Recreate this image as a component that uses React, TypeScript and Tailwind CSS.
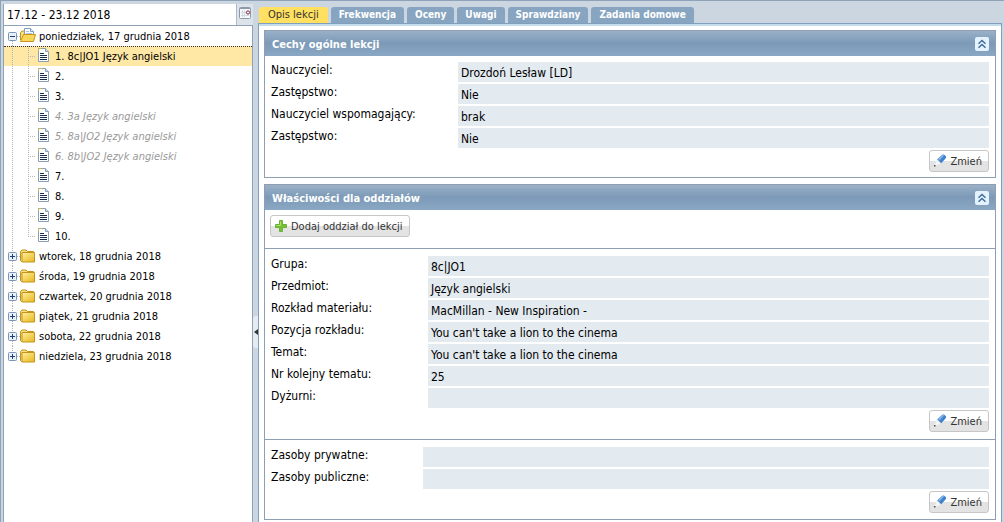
import { useState } from 'react';
import clsx from 'clsx';

interface Lesson {
  id: number;
  label: string;
  muted?: boolean;
}

interface Field {
  label: string;
  value: string;
}

const tabs = ['Opis lekcji', 'Frekwencja', 'Oceny', 'Uwagi', 'Sprawdziany', 'Zadania domowe'];

const lessons: Lesson[] = [
  { id: 1, label: '1. 8c|JO1 Język angielski' },
  { id: 2, label: '2.' },
  { id: 3, label: '3.' },
  { id: 4, label: '4. 3a Język angielski', muted: true },
  { id: 5, label: '5. 8a|JO2 Język angielski', muted: true },
  { id: 6, label: '6. 8b|JO2 Język angielski', muted: true },
  { id: 7, label: '7.' },
  { id: 8, label: '8.' },
  { id: 9, label: '9.' },
  { id: 10, label: '10.' },
];

const days = [
  'wtorek, 18 grudnia 2018',
  'środa, 19 grudnia 2018',
  'czwartek, 20 grudnia 2018',
  'piątek, 21 grudnia 2018',
  'sobota, 22 grudnia 2018',
  'niedziela, 23 grudnia 2018',
];

const generalFields: Field[] = [
  { label: 'Nauczyciel:', value: 'Drozdoń Lesław [LD]' },
  { label: 'Zastępstwo:', value: 'Nie' },
  { label: 'Nauczyciel wspomagający:', value: 'brak' },
  { label: 'Zastępstwo:', value: 'Nie' },
];

const groupFields: Field[] = [
  { label: 'Grupa:', value: '8c|JO1' },
  { label: 'Przedmiot:', value: 'Język angielski' },
  { label: 'Rozkład materiału:', value: 'MacMillan - New Inspiration -' },
  { label: 'Pozycja rozkładu:', value: "You can't take a lion to the cinema" },
  { label: 'Temat:', value: "You can't take a lion to the cinema" },
  { label: 'Nr kolejny tematu:', value: '25' },
  { label: 'Dyżurni:', value: '' },
];

const resourceFields: Field[] = [
  { label: 'Zasoby prywatne:', value: '' },
  { label: 'Zasoby publiczne:', value: '' },
];

function Expander({ open, first, last }: { open?: boolean; first?: boolean; last?: boolean }) {
  return (
    <svg width="16" height="20" viewBox="0 0 16 20" className="shrink-0" aria-hidden="true">
      {!first && <path d="M8.5 0v6" stroke="#b5b5b5" strokeDasharray="1 1" />}
      {!last && <path d="M8.5 15v5" stroke="#b5b5b5" strokeDasharray="1 1" />}
      <path d="M13 10.5h3" stroke="#b5b5b5" strokeDasharray="1 1" />
      <rect x="4.5" y="6.5" width="8" height="8" rx="1" fill="#e9f0f8" stroke="#7b95b8" />
      <path d="M6 10.5h5" stroke="#1c3f7c" />
      {!open && <path d="M8.5 8v5" stroke="#1c3f7c" />}
    </svg>
  );
}

function Guide({ elbow, last }: { elbow?: boolean; last?: boolean }) {
  return (
    <svg width="16" height="20" viewBox="0 0 16 20" className="shrink-0" aria-hidden="true">
      <path d={last ? 'M8.5 0v11' : 'M8.5 0v20'} stroke="#b5b5b5" strokeDasharray="1 1" />
      {elbow && <path d="M10 10.5h6" stroke="#b5b5b5" strokeDasharray="1 1" />}
    </svg>
  );
}

function FolderIcon() {
  return (
    <svg width="16" height="20" viewBox="0 0 16 20" className="shrink-0" aria-hidden="true">
      <defs>
        <linearGradient id="folder" x1="0" y1="0" x2="1" y2="1">
          <stop offset="0" stopColor="#fff3a6" />
          <stop offset="1" stopColor="#e9b71c" />
        </linearGradient>
      </defs>
      <path d="M.5 14.5v-9l1.500-1.500h4l1.500 1.500h6v2" fill="#f8dc78" stroke="#c3951f" />
      <path d="M.5 14.500l1.500 1.500V6.500h12.500v9.500h-12.500z" fill="url(#folder)" stroke="#c3951f" />
    </svg>
  );
}

function FolderOpenIcon() {
  return (
    <svg width="16" height="20" viewBox="0 0 16 20" className="shrink-0" aria-hidden="true">
      <path d="M.5 14V6.500l1.500-1.500h3v4" fill="#f8dc78" stroke="#c3951f" />
      <path d="M4.500 11V2.500h6l3 3V11" fill="#fff" stroke="#7c9cc4" />
      <path d="M10.500 2.500v3h3" fill="#dce9f7" stroke="#7c9cc4" />
      <path d="M6 5.500h3M6 7.500h6" stroke="#a9c4e4" />
      <path d="M.5 15.500l3-7h12l-2 7z" fill="#fbd658" stroke="#c3951f" strokeLinejoin="round" />
    </svg>
  );
}

function LessonIcon() {
  return (
    <svg width="16" height="20" viewBox="0 0 16 20" className="shrink-0" aria-hidden="true">
      <path d="M2.500 2.500h7l3 3v10h-10z" fill="#fbfdff" stroke="#8b9fb5" />
      <path d="M9.500 2.500v3h3" fill="#d5e3f0" stroke="#8b9fb5" />
      <path d="M2.500 5.500V2.500H6" fill="none" stroke="#c0b36a" />
      <path d="M4 7.500h4M4 9.500h7M4 11.500h7M4 13.500h7" stroke="#1d2f48" />
    </svg>
  );
}

function CalendarIcon() {
  return (
    <svg width="13" height="12" viewBox="0 0 13 12" aria-hidden="true">
      <rect x=".5" y=".5" width="11" height="11" rx="1" fill="#f7f8fb" stroke="#8d99aa" />
      <path d="M1 1.500h10" stroke="#8d99aa" />
      <path d="M3.500 3v7M5.500 3v7M2 5.500h6M2 8.500h8" stroke="#d3d8e3" />
      <circle cx="9" cy="5.500" r="1.600" fill="#fff" stroke="#7a2433" />
    </svg>
  );
}

function PencilIcon() {
  return (
    <svg width="16" height="16" viewBox="0 0 16 16" aria-hidden="true">
      <path d="M5 6.500L10 2Q11.500 1 13 2.200L14 3.500Q14.500 4.500 13.500 5.500L9 10.500z" fill="#3f83cc" />
      <path d="M6 5.600L10.500 1.800Q11.500 1.300 12.500 2L7.500 7.500z" fill="#80b4e8" />
      <path d="M5 6.500L9 10.500 3.500 13 2.500 12z" fill="#f4f6f8" stroke="#e0e4e8" strokeWidth=".5" />
      <path d="M2 12h1.500v1.500H2z" fill="#4a4a4a" />
    </svg>
  );
}

function PlusIcon() {
  return (
    <svg width="16" height="16" viewBox="0 0 16 16" aria-hidden="true">
      <path
        d="M6.500 2.500h3v4h4v3h-4v4h-3v-4h-4v-3h4z"
        fill="#72c32d"
        stroke="#6fb03c"
        strokeLinejoin="round"
      />
      <path d="M7.500 3.500v4h-4" fill="none" stroke="#a9e070" />
    </svg>
  );
}

function ToolButton({ icon, children }: { icon: React.ReactNode; children: React.ReactNode }) {
  return (
    <button
      type="button"
      className="flex h-[22px] items-center gap-0.5 whitespace-nowrap rounded-[3px] border border-[#c6c6c6] bg-linear-to-b from-white from-48% to-[#e3e3e3] to-52% pr-1.5 pl-0.5 text-[11px] leading-4 text-[#333]"
    >
      {icon}
      <span className="pt-0.5">{children}</span>
    </button>
  );
}

function PanelHeader({ title, open, onToggle }: { title: string; open: boolean; onToggle: () => void }) {
  return (
    <div className="flex h-[25px] items-center justify-between bg-linear-to-b from-[#9ab1c7] from-0% via-[#7c9ab8] via-48% to-[#8aa8c3] pr-1.5 pl-[7px]">
      <h2 className="pt-0.5 text-[11px] leading-4 font-bold text-white">{title}</h2>
      <button
        type="button"
        aria-label={open ? 'Zwiń' : 'Rozwiń'}
        onClick={onToggle}
        className="flex size-[14px] items-center justify-center rounded-[2px] bg-[#e4f2fd]"
      >
        <svg width="10" height="10" viewBox="0 0 10 10" fill="none" stroke="#3d6c98" strokeWidth="1.400" aria-hidden="true">
          <path d="M1.500 4.800L5 1.500l3.500 3.300M1.500 8.800L5 5.500l3.500 3.300" />
        </svg>
      </button>
    </div>
  );
}

function FieldList({ fields, labelClass }: { fields: Field[]; labelClass: string }) {
  return (
    <dl className="flex flex-col gap-0.5 text-[12px] leading-4">
      {fields.map((field, index) => (
        <div key={index} className="flex h-5">
          <dt className={clsx('shrink-0 whitespace-nowrap', labelClass)}>{field.label}</dt>
          <dd className="min-w-0 flex-1 truncate bg-[#e3eaf0] px-[3px] pt-[3px]">{field.value}</dd>
        </div>
      ))}
    </dl>
  );
}

function EditRow() {
  return (
    <div className="mt-0.5 flex justify-end">
      <ToolButton icon={<PencilIcon />}>Zmień</ToolButton>
    </div>
  );
}

function LessonTree() {
  const [open, setOpen] = useState(true);
  const [selected, setSelected] = useState(1);

  return (
    <ul className="text-[11px] leading-[18px]">
      <li>
        <button type="button" className="flex h-5 w-full items-end" onClick={() => setOpen(!open)}>
          <Expander open={open} first />
          <FolderOpenIcon />
          <span className="ml-[3px] whitespace-nowrap">poniedziałek, 17 grudnia 2018</span>
        </button>
        {open && (
          <ul>
            {lessons.map((lesson, index) => (
              <li key={lesson.id}>
                <button
                  type="button"
                  onClick={() => setSelected(lesson.id)}
                  className={clsx(
                    'flex h-5 w-full items-end',
                    selected === lesson.id && 'border-t border-dotted border-[#333] bg-[#ffe8a6]'
                  )}
                >
                  <Guide />
                  <Guide elbow last={index === lessons.length - 1} />
                  <LessonIcon />
                  <span
                    className={clsx('ml-[3px] whitespace-nowrap', lesson.muted && 'italic text-[#999]')}
                  >
                    {lesson.label}
                  </span>
                </button>
              </li>
            ))}
          </ul>
        )}
      </li>
      {days.map((day, index) => (
        <li key={day}>
          <button type="button" className="flex h-5 w-full items-end">
            <Expander last={index === days.length - 1} />
            <FolderIcon />
            <span className="ml-[3px] whitespace-nowrap">{day}</span>
          </button>
        </li>
      ))}
    </ul>
  );
}

export default function App() {
  const [activeTab, setActiveTab] = useState(tabs[0]);
  const [generalOpen, setGeneralOpen] = useState(true);
  const [groupsOpen, setGroupsOpen] = useState(true);

  return (
    <div className="flex min-h-screen border-t border-l border-[#8fa3b8] bg-[#cbd6e1] pr-0.5 pl-0.5 font-['DejaVu_Sans_Condensed','DejaVu_Sans',sans-serif] text-black">
      <aside className="flex w-[250px] shrink-0 flex-col pt-[3px]">
        <div className="flex h-[21px] border-l border-[#8fa3b8]">
          <input
            type="text"
            aria-label="Tydzień"
            defaultValue="17.12 - 23.12 2018"
            className="min-w-0 flex-1 bg-white px-[3px] text-[12px] outline-none"
          />
          <button
            type="button"
            aria-label="Kalendarz"
            className="flex w-[17px] justify-center border-l border-[#b5b8c8] bg-[#dde3ea] pt-[3px]"
          >
            <CalendarIcon />
          </button>
        </div>
        <nav className="flex-1 border-x border-t border-[#8fa3b8] bg-white">
          <LessonTree />
        </nav>
      </aside>

      <div className="w-[5px] shrink-0 pt-[315px]">
        <button
          type="button"
          aria-label="Zwiń panel"
          className="flex h-8 w-full items-center justify-center rounded-l-[3px] bg-[#e6ebf1]"
        >
          <svg width="4" height="6" viewBox="0 0 4 6" aria-hidden="true">
            <path d="M4 0v6L0 3z" fill="#333" />
          </svg>
        </button>
      </div>

      <main className="flex min-w-0 flex-1 flex-col pt-1.5">
        <div role="tablist" className="flex h-4 gap-[3px] pl-px leading-4">
          {tabs.map(tab => (
            <button
              key={tab}
              type="button"
              role="tab"
              aria-selected={tab === activeTab}
              onClick={() => setActiveTab(tab)}
              className={clsx(
                'whitespace-nowrap rounded-t-[3px]',
                tab === activeTab
                  ? 'bg-[#ffe060] px-[9px] text-[11px] text-[#333]'
                  : 'bg-[#87a5c0] px-2 text-[10px] font-bold text-white'
              )}
            >
              {tab}
            </button>
          ))}
        </div>
        <div className="flex-1 border-x border-t border-[#7f9fbc] bg-white">
          <div className="h-0.5 bg-[#c5dcec]" />
          <div className="flex flex-col gap-1.5 px-[5px] pt-1 pb-0.5">
            <section className="border border-[#8f9fb2]">
              <PanelHeader
                title="Cechy ogólne lekcji"
                open={generalOpen}
                onToggle={() => setGeneralOpen(!generalOpen)}
              />
              {generalOpen && (
                <div className="px-1.5 pt-1.5 pb-[5px]">
                  <FieldList fields={generalFields} labelClass="w-[187px]" />
                  <EditRow />
                </div>
              )}
            </section>

            <section className="border border-[#8f9fb2]">
              <PanelHeader
                title="Właściwości dla oddziałów"
                open={groupsOpen}
                onToggle={() => setGroupsOpen(!groupsOpen)}
              />
              {groupsOpen && (
                <>
                  <div className="flex px-[5px] pt-[5px] pb-[11px]">
                    <ToolButton icon={<PlusIcon />}>Dodaj oddział do lekcji</ToolButton>
                  </div>
                  <div className="border-t border-[#8f9fb2] px-1.5 pt-[7px] pb-[7px]">
                    <FieldList fields={groupFields} labelClass="w-[157px]" />
                    <EditRow />
                  </div>
                  <div className="border-t border-[#8f9fb2] px-1.5 pt-[7px] pb-1.5">
                    <FieldList fields={resourceFields} labelClass="w-[152px]" />
                    <EditRow />
                  </div>
                </>
              )}
            </section>
          </div>
        </div>
      </main>
    </div>
  );
}
